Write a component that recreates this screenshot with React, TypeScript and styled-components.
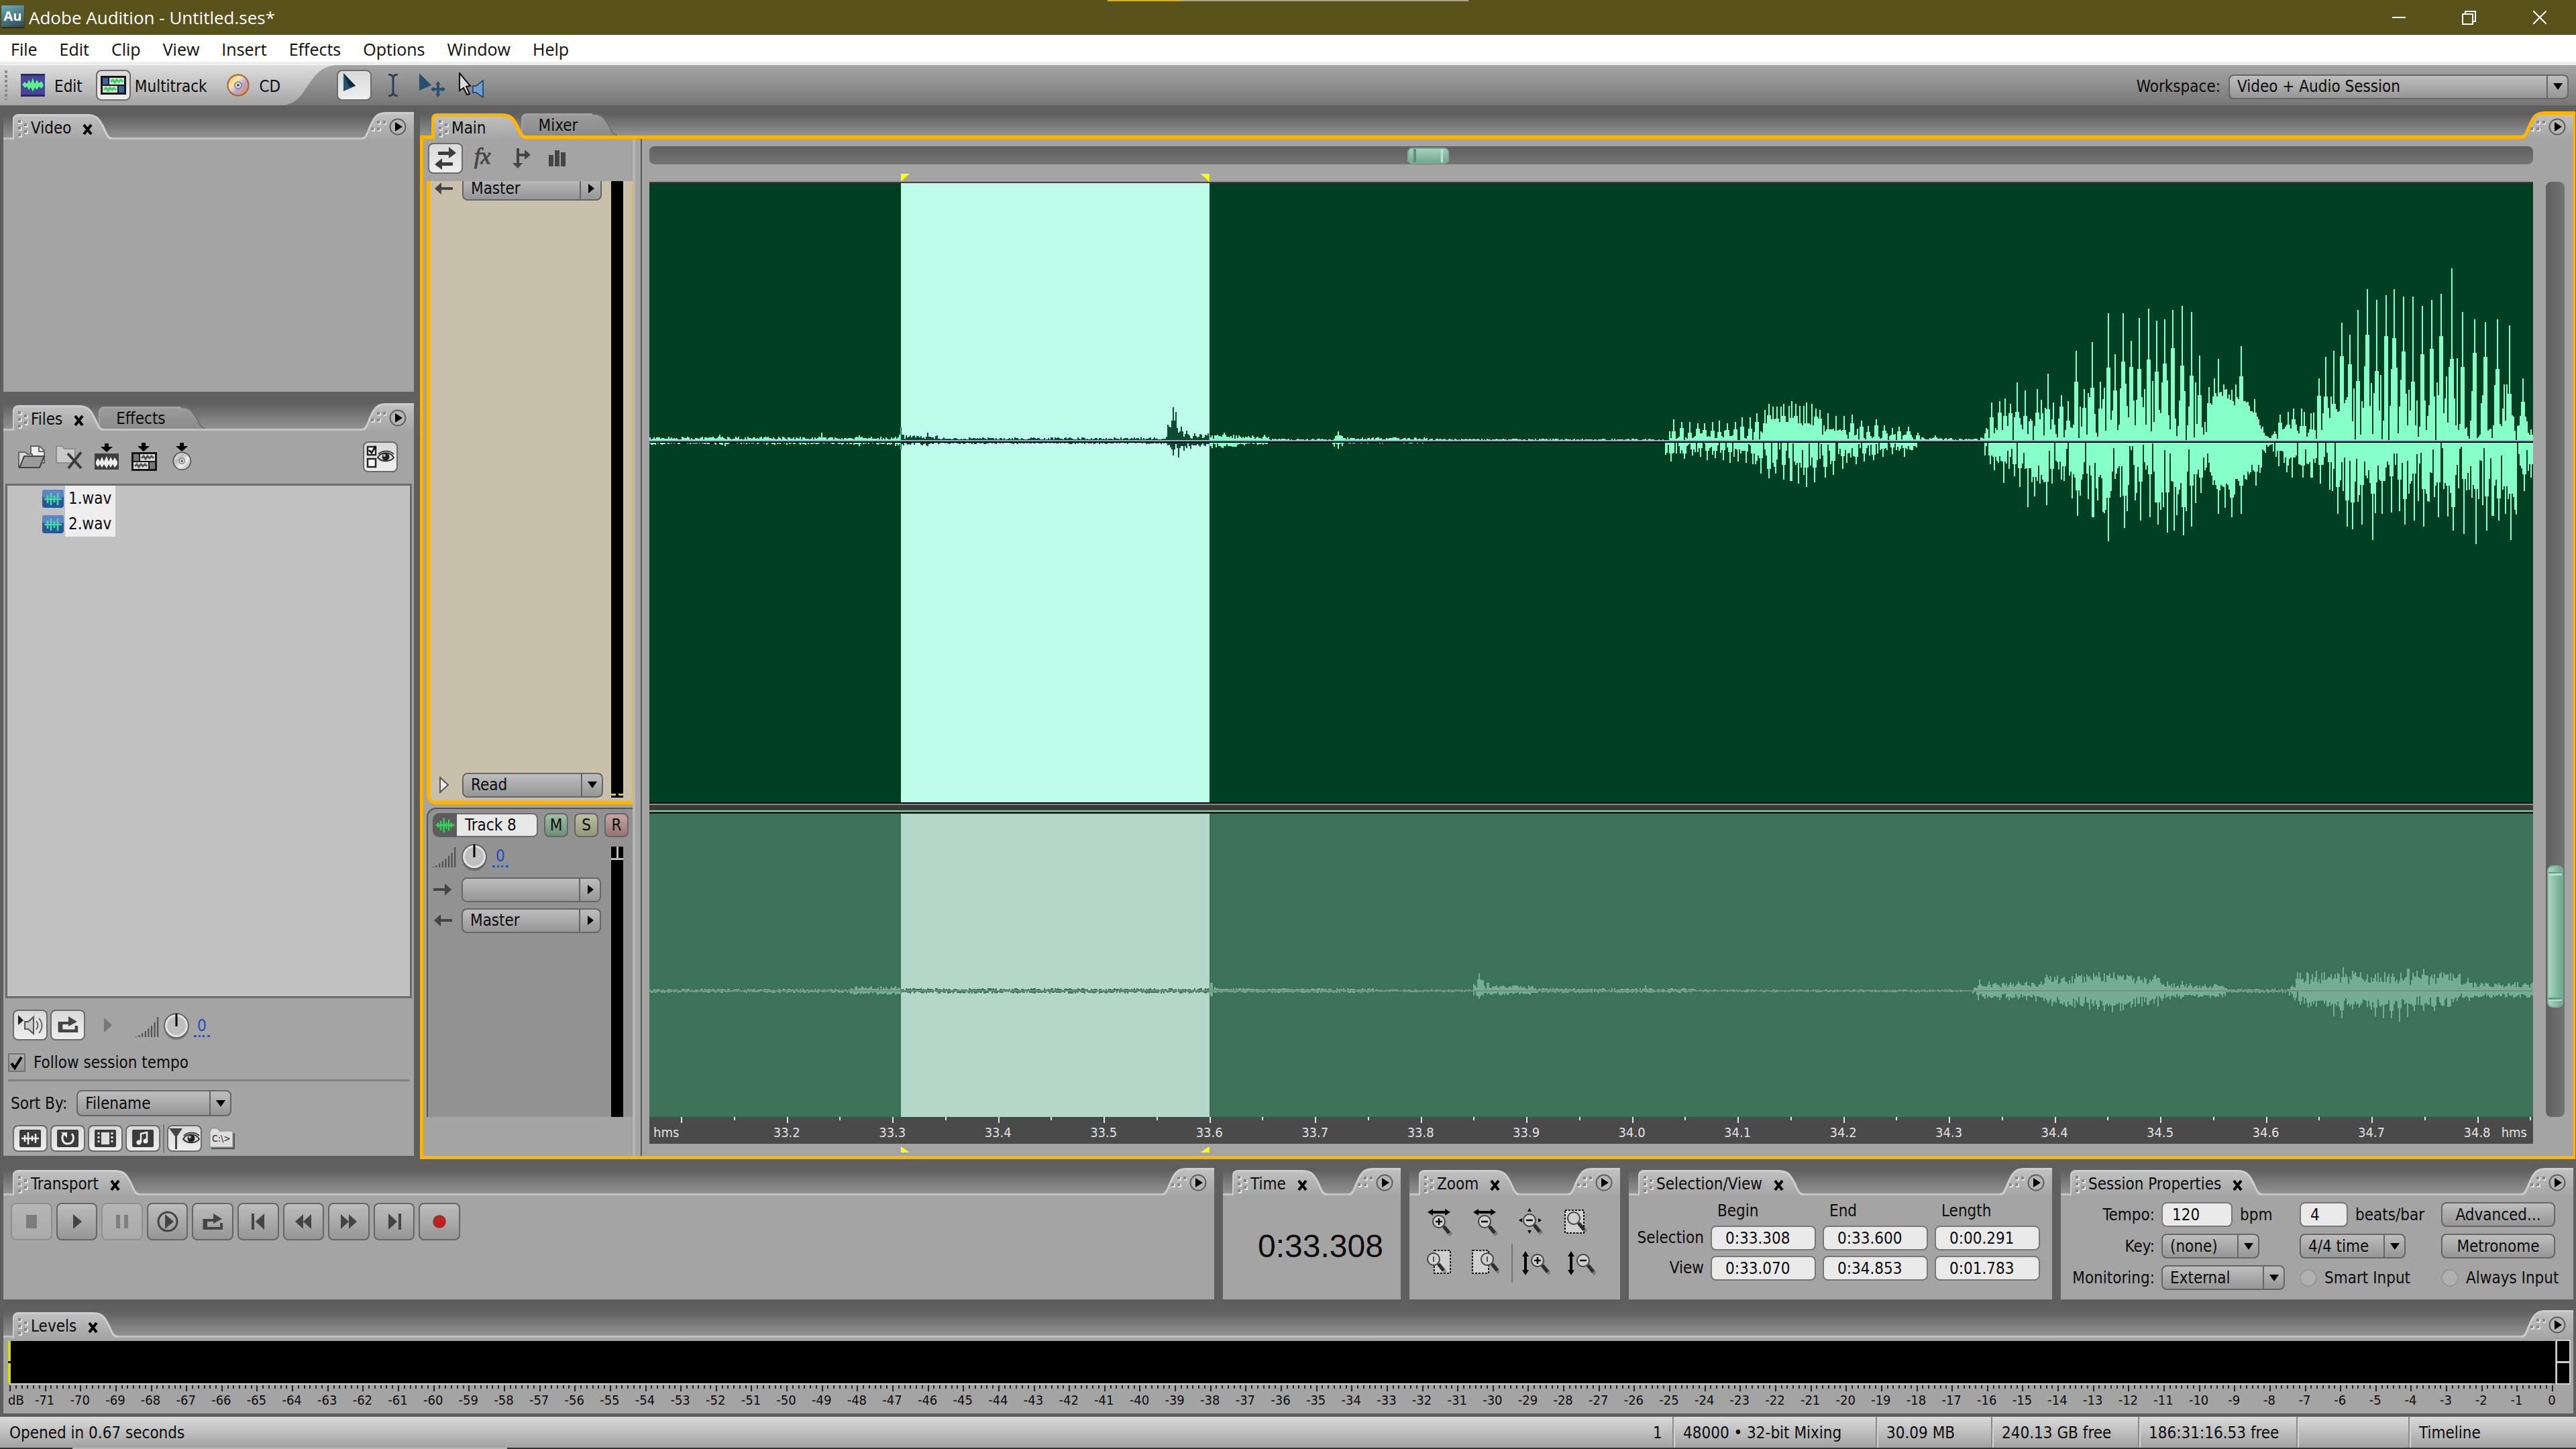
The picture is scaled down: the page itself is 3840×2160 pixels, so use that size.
import React from "react";
import styled, { createGlobalStyle, css } from "styled-components";

const ui = `"DejaVu Sans Condensed", "Noto Sans", sans-serif`;
const shell = `"Open Sans", "Noto Sans", sans-serif`;
const amber = "#ffb400";
const ink = "#454545";

const GlobalStyle = createGlobalStyle`
  *, *::before, *::after { box-sizing: border-box; }
  html, body { margin: 0; padding: 0; background: #5f5f5f; }
  body { font-family: ${ui}; font-size: 24px; line-height: 30px; color: #0c0c0c; }
  button, input, select { font: inherit; color: inherit; margin: 0; padding: 0; }
  svg { display: block; flex: none; }
`;

/* ---------- shell ---------- */

const Shell = styled.div`
  position: relative;
  display: flex;
  flex-direction: column;
  min-height: 100vh;
  background: #5f5f5f;
`;
const TopHint = styled.div`
  position: absolute;
  top: 0;
  left: 43%;
  width: 14%;
  height: 2px;
  background: linear-gradient(90deg, #d8b021 20%, #aaa78c 20%);
`;
const TitleBar = styled.header`
  display: flex;
  align-items: center;
  height: 52px;
  padding: 0 2px;
  background: #59521b;
  color: #fff;
  font: 26px/32px ${shell};
`;
const AppTitle = styled.h1`
  flex: 1;
  margin: 0;
  padding-left: 7px;
  font: inherit;
`;
const AppBadge = styled.span`
  width: 34px;
  height: 32px;
  margin-bottom: 4px;
  background: linear-gradient(160deg, #6fa9b4, #2b4a59);
  box-shadow: 0 2px 2px rgba(0, 0, 0, 0.5);
  color: #fff;
  font: bold 20px/32px "Open Sans", sans-serif;
  text-align: center;
`;
const WindowButton = styled.button`
  display: flex;
  align-items: center;
  justify-content: center;
  width: 105px;
  height: 50px;
  border: 0;
  background: none;
`;
const MenuBar = styled.nav`
  display: flex;
  align-items: center;
  gap: 33px;
  height: 45px;
  padding: 0 16px 3px;
  background: linear-gradient(#fff 40px, #e9e9e9 41px, #f4f4f4);
  font: 25px/32px ${shell};
`;
const MenuItem = styled.button`
  border: 0;
  background: none;
`;

/* ---------- tool bar ---------- */

const ToolBar = styled.div`
  display: flex;
  align-items: center;
  height: 60px;
  padding-right: 11px;
  background: linear-gradient(#a6a6a6, #767676);
`;
const ModeStrip = styled.div`
  display: flex;
  align-items: center;
  align-self: stretch;
  padding-left: 6px;
  background: linear-gradient(#dedede, #a5a5a5);
`;
const ModeList = styled.div`
  display: flex;
  gap: 20px;
  padding-left: 11px;
`;
const Mode = styled.button`
  display: flex;
  align-items: center;
  gap: 6px;
  height: 46px;
  border: 0;
  background: none;
`;
const ModeText = styled.span`
  padding-top: 3px;
`;
const face = css`
  border: 2px solid #6b6b6b;
  border-radius: 8px;
  background: linear-gradient(#d9d9d9, #eeeeee);
`;
const IconFrame = styled.span<{ $on?: boolean }>`
  display: flex;
  align-items: center;
  justify-content: center;
  width: 52px;
  height: 46px;
  ${(p) => p.$on && face}
`;
const ToolGroup = styled.div`
  display: flex;
  flex: 1;
`;
const ToolButton = styled.button<{ $on?: boolean; $h?: number; $w?: number }>`
  display: flex;
  align-items: center;
  justify-content: center;
  width: ${(p) => p.$w ?? 52}px;
  height: ${(p) => p.$h ?? 46}px;
  border: 0;
  background: none;
  ${(p) => p.$on && face}
`;
const Labelled = styled.label`
  display: flex;
  align-items: center;
  gap: 12px;
  padding-top: 4px;
`;

/* ---------- shared controls ---------- */

const ComboFrame = styled.span<{ $w?: number; $h?: number }>`
  display: flex;
  width: ${(p) => (p.$w ? p.$w + "px" : "100%")};
  height: ${(p) => p.$h ?? 37}px;
  border: 2px solid #666;
  border-radius: 8px;
  background: linear-gradient(#bebebe, #969696);
  overflow: hidden;
`;
const ComboSelect = styled.select`
  appearance: none;
  flex: 1;
  min-width: 0;
  padding-left: 11px;
  border: 0;
  background: none;
  outline: none;
`;
const ComboArrow = styled.span`
  display: flex;
  align-items: center;
  justify-content: center;
  width: 31px;
  border-left: 2px solid #666;
`;
function Combo({ label, value, w, h, side, id }: { label: string; value: string; w?: number; h?: number; side?: boolean; id?: string }) {
  return (
    <ComboFrame $w={w} $h={h}>
      <ComboSelect aria-label={label} id={id} defaultValue={value}>
        <option value={value}>{value}</option>
      </ComboSelect>
      <ComboArrow>
        <svg width="16" height="16" viewBox="0 0 16 16">
          <path d={side ? "M4 1 L13 8 L4 15Z" : "M1 3 H15 L8 13Z"} fill="#000" />
        </svg>
      </ComboArrow>
    </ComboFrame>
  );
}
const Field = styled.input<{ $w?: number }>`
  width: ${(p) => (p.$w ? p.$w + "px" : "100%")};
  height: 37px;
  padding-left: 14px;
  border: 2px solid #777;
  border-radius: 8px;
  background: #eaeaea;
`;
const SpanField = styled(Field)`
  padding-left: 20px;
`;
const PushButton = styled.button`
  height: 37px;
  border: 2px solid #666;
  border-radius: 8px;
  background: linear-gradient(#bebebe, #969696);
`;

/* ---------- panels and tabs ---------- */

const Panel = styled.section<{ $grow?: boolean }>`
  display: flex;
  flex-direction: column;
  min-width: 0;
  flex: ${(p) => (p.$grow ? "1 1 auto" : "none")};
`;
const PanelHead = styled.div<{ $pad: number; $active?: boolean }>`
  display: flex;
  align-items: flex-end;
  padding-top: ${(p) => p.$pad}px;
  padding-left: ${(p) => (p.$active ? 17 : 14)}px;
  background: linear-gradient(#5f5f5f 30%, #929292);
  border-bottom: ${(p) => (p.$active ? "5px solid " + amber : "3px solid #c2c2c2")};
`;
const TabWrap = styled.div<{ $active?: boolean; $behind?: boolean }>`
  display: flex;
  position: relative;
  z-index: ${(p) => (p.$behind ? 0 : 1)};
  margin-bottom: ${(p) => (p.$behind ? 0 : p.$active ? -5 : -3)}px;
  margin-left: ${(p) => (p.$behind ? -7 : 0)}px;
`;
const TabFace = styled.div<{ $active?: boolean; $behind?: boolean; $plain?: boolean }>`
  display: flex;
  align-items: center;
  gap: 4px;
  height: ${(p) => (p.$behind ? 33 : 38)}px;
  padding-left: ${(p) => (p.$behind ? 24 : 4)}px;
  padding-right: ${(p) => (p.$plain ? 22 : 0)}px;
  border-style: solid;
  border-width: ${(p) => (p.$active ? "5px 0 0 5px" : "3px 0 0 2px")};
  border-color: ${(p) => (p.$active ? amber : p.$behind ? "#a2a2a2" : "#cdcdcd")};
  border-top-left-radius: 8px;
  background: ${(p) => (p.$behind ? "linear-gradient(#9b9b9b, #8b8b8b)" : "linear-gradient(#c0c0c0, #a5a5a5)")};
`;
const TabLabel = styled.h2`
  margin: 0;
  font: inherit;
  white-space: nowrap;
`;
const CloseButton = styled.button`
  display: flex;
  position: relative;
  z-index: 1;
  margin-right: -8px;
  padding: 6px 0 2px 13px;
  border: 0;
  background: none;
`;
const HeadSpace = styled.div`
  flex: 1;
`;
const CornerWrap = styled.div<{ $active?: boolean }>`
  display: flex;
  position: relative;
  margin-bottom: ${(p) => (p.$active ? -5 : -3)}px;
`;
const CornerFace = styled.div<{ $active?: boolean }>`
  display: flex;
  align-items: center;
  gap: 4px;
  height: 41px;
  padding-right: 11px;
  border-top: ${(p) => (p.$active ? "5px solid " + amber : "3px solid #cdcdcd")};
  border-right: ${(p) => (p.$active ? "3px solid " + amber : "0")};
  background: linear-gradient(#c0c0c0, #a5a5a5);
  & > svg { margin-left: -26px; }
`;
const RoundButton = styled.button`
  display: flex;
  padding: 0;
  border: 0;
  background: none;
`;
const PanelBody = styled.div<{ $h?: number }>`
  flex: 1 0 auto;
  min-height: ${(p) => p.$h ?? 0}px;
  background: #a4a4a4;
`;

function Grip({ corner }: { corner?: boolean }) {
  const dots = corner ? [[12, 2], [21, 2], [3, 12], [12, 12]] : [[2, 2], [2, 12], [2, 22], [11, 7], [11, 17]];
  return (
    <svg width={corner ? 26 : 17} height={corner ? 22 : 28} viewBox={corner ? "0 0 26 22" : "0 0 17 28"}>
      {dots.map(([x, y]) => (
        <g key={x + "-" + y}>
          <rect x={x + 1} y={y + 1} width="5" height="5" fill="#e2e2e2" />
          <rect x={x} y={y} width="4" height="4" fill="#868686" />
        </g>
      ))}
    </svg>
  );
}
function Slope({ active, behind, flip }: { active?: boolean; behind?: boolean; flip?: boolean }) {
  const h = behind ? 33 : flip ? 41 : 38;
  const s = active ? 5 : behind ? 2 : 3;
  const t = s / 2;
  const edge = `M0 ${t} C13 ${t} 17 6 23 ${h * 0.46} C29 ${h * 0.78} 30 ${h - t} 37 ${h - t}`;
  const gid = `sl${active ? 1 : 0}${behind ? 1 : 0}${flip ? 1 : 0}`;
  return (
    <svg width="37" height={h} viewBox={`0 0 37 ${h}`}>
      <defs>
        <linearGradient id={gid} x1="0" y1="0" x2="0" y2="1">
          <stop offset="0" stopColor={behind ? "#9b9b9b" : "#c0c0c0"} />
          <stop offset="1" stopColor={behind ? "#8b8b8b" : "#a5a5a5"} />
        </linearGradient>
      </defs>
      <g transform={flip ? "translate(37 0) scale(-1 1)" : undefined}>
        <path d={`${edge} V${h} H0Z`} fill={`url(#${gid})`} />
        <path d={edge} fill="none" stroke={active ? amber : behind ? "#6e6e6e" : "#cdcdcd"} strokeWidth={s} />
      </g>
    </svg>
  );
}
function Tab({ label, active, behind, closable }: { label: string; active?: boolean; behind?: boolean; closable?: boolean }) {
  return (
    <TabWrap $active={active} $behind={behind}>
      <TabFace $active={active} $behind={behind} $plain={!closable}>
        {!behind && <Grip />}
        <TabLabel>{label}</TabLabel>
        {closable && (
          <CloseButton aria-label={"Close " + label}>
            <svg width="15" height="16" viewBox="0 0 15 16">
              <path d="M2 1 L13 15 M13 1 L2 15" stroke="#000" strokeWidth="4" />
            </svg>
          </CloseButton>
        )}
      </TabFace>
      <Slope active={active} behind={behind} />
    </TabWrap>
  );
}
function Corner({ active }: { active?: boolean }) {
  return (
    <CornerWrap $active={active}>
      <Slope active={active} flip />
      <CornerFace $active={active}>
        <Grip corner />
        <RoundButton aria-label="Panel menu">
          <svg width="26" height="26" viewBox="0 0 26 26">
            <circle cx="13" cy="13" r="11.5" fill="#b5b5b5" stroke="#606060" strokeWidth="2" />
            <path d="M9 6 L20 13 L9 20Z" fill="#000" />
          </svg>
        </RoundButton>
      </CornerFace>
    </CornerWrap>
  );
}

/* ---------- workspace ---------- */

const Workspace = styled.main`
  display: grid;
  grid-template-columns: 612px minmax(0, 1fr);
  gap: 9px;
  flex: 1;
  padding: 0 1px 0 5px;
`;
const LeftColumn = styled.div`
  display: flex;
  flex-direction: column;
  padding-bottom: 5px;
`;
const FilesBody = styled(PanelBody)`
  display: flex;
  flex-direction: column;
  padding: 0 3px 5px;
`;
const FileTools = styled.div`
  display: flex;
  align-items: center;
  gap: 4px;
  padding: 16px 21px 17px 13px;
`;
const FileList = styled.ul`
  flex: 1;
  margin: 0;
  padding: 0 0 0 52px;
  border: 3px solid #6c6c6c;
  background: #c1c1c1;
  list-style: none;
`;
const FileRow = styled.li`
  display: flex;
  align-items: center;
  gap: 2px;
  height: 38px;
`;
const FileName = styled.span`
  width: 75px;
  padding-left: 5px;
  background: #eeeeee;
  line-height: 38px;
`;
const ControlRow = styled.div<{ $gap?: number; $top?: number; $left?: number }>`
  display: flex;
  align-items: center;
  gap: ${(p) => p.$gap ?? 4}px;
  padding-top: ${(p) => p.$top ?? 0}px;
  padding-left: ${(p) => p.$left ?? 0}px;
`;
const Rule = styled.hr`
  width: calc(100% - 8px);
  margin: 10px 4px 0;
  border: 0;
  border-top: 3px solid #818181;
`;
const Tick = styled.input`
  appearance: none;
  width: 26px;
  height: 28px;
  border: 2px solid #747474;
  background: linear-gradient(#aaa, #969696);
`;
const TickBox = styled.span`
  display: grid;
  & > * { grid-area: 1 / 1; }
  & > svg { pointer-events: none; }
`;
const Upright = styled.span<{ $h: number }>`
  width: 2px;
  height: ${(p) => p.$h}px;
  background: #777;
`;
const Gain = styled.a`
  padding: 0 5px;
  border-bottom: 3px dotted #1f55c8;
  color: #1f4fc0;
  line-height: 28px;
  text-decoration: none;
`;

/* ---------- session view ---------- */

const SessionBody = styled.div`
  display: grid;
  grid-template-columns: 312px 14px minmax(0, 1fr);
  flex: 1;
  border: solid ${amber};
  border-width: 0 3px 5px 5px;
  background: #a4a4a4;
`;
const Splitter = styled.div`
  border-left: 4px solid #b4b4b4;
  border-right: 2px solid #555;
`;
const TrackColumn = styled.div`
  display: flex;
  flex-direction: column;
  padding-left: 5px;
`;
const TrackTools = styled.div`
  display: flex;
  align-items: center;
  height: 63px;
  padding: 0 0 6px 2px;
`;
const TrackCard = styled.div<{ $sel?: boolean; $share: number }>`
  display: grid;
  grid-template-columns: minmax(0, 1fr) 18px;
  gap: 12px;
  flex: ${(p) => p.$share} 1 0;
  padding: ${(p) => (p.$sel ? "0 12px 5px 5px" : "6px 14px 0 7px")};
  margin-bottom: ${(p) => (p.$sel ? 5 : 0)}px;
  border-style: solid;
  border-width: ${(p) => (p.$sel ? "0 2px 5px 5px" : "2px 0 0 2px")};
  border-color: ${(p) => (p.$sel ? `${amber} #e0bf63 ${amber} ${amber}` : "#555")};
  border-radius: ${(p) => (p.$sel ? "0 0 0 14px" : "14px 0 0 0")};
  background: ${(p) => (p.$sel ? "#c8c0aa" : "#929292")};
  overflow: hidden;
`;
const TrackControls = styled.div<{ $scrolled?: boolean }>`
  display: flex;
  flex-direction: column;
  justify-content: ${(p) => (p.$scrolled ? "space-between" : "flex-start")};
  gap: 9px;
  min-width: 0;
  margin-top: ${(p) => (p.$scrolled ? -8 : 0)}px;
`;
const Route = styled.div`
  display: grid;
  grid-template-columns: 31px 1fr;
  gap: 12px;
  align-items: center;
`;
const Meter = styled.div`
  display: flex;
  flex-direction: column;
`;
const MeterGap = styled.div`
  height: 50px;
`;
const MeterClip = styled.div`
  height: 20px;
  border-bottom: 3px solid #bbb;
  background: linear-gradient(90deg, #000 8px, #bbb 8px, #bbb 11px, #000 11px);
`;
const MeterFill = styled.div`
  flex: 1;
  background: #000;
`;
const MeterFloor = styled.div`
  height: 6px;
  border-bottom: 3px solid #000;
  background: linear-gradient(90deg, #d9d900 7px, #000 7px, #000 11px, #d9d900 11px);
`;
const TrackTitle = styled.div`
  display: grid;
  grid-template-columns: 157px 36px 36px 36px;
  column-gap: 9px;
  width: 292px;
  height: 36px;
`;
const TrackBadge = styled.div`
  display: grid;
  grid-template-columns: 36px 1fr;
`;
const TrackIcon = styled.span`
  display: flex;
  align-items: center;
  padding-left: 2px;
  border-radius: 10px 0 0 10px;
  background: #5c5c5c;
`;
const TrackName = styled.input`
  width: 100%;
  padding-left: 12px;
  border: 2px solid #6c6c6c;
  border-left: 0;
  border-radius: 0 8px 8px 0;
  background: #e8e8e8;
`;
const ToggleButton = styled.button<{ $a: string; $b: string }>`
  border: 2px solid #666;
  border-radius: 8px;
  background: linear-gradient(${(p) => p.$a}, ${(p) => p.$b});
`;
const Timeline = styled.div`
  display: grid;
  grid-template-columns: minmax(0, 1fr) 28px;
  grid-template-rows: 27px 26px minmax(0, 1fr) 40px 18px;
  column-gap: 19px;
  padding: 11px 13px 0 11px;
`;
const ScrollTrack = styled.div<{ $vertical?: boolean }>`
  position: relative;
  grid-row: ${(p) => (p.$vertical ? 3 : 1)};
  grid-column: ${(p) => (p.$vertical ? 2 : 1)};
  border-radius: 8px;
  background: linear-gradient(${(p) => (p.$vertical ? "90deg, " : "")}#606060, #747474);
`;
const ThumbX = styled.div`
  position: absolute;
  top: 2px;
  bottom: 1px;
  width: 62px;
  border: 2px solid #7fae98;
  border-radius: 7px;
  background: linear-gradient(90deg, transparent 7px, #5f8f7a 7px, #5f8f7a 11px, transparent 11px, transparent 48px, #bfe3d1 48px, #bfe3d1 51px, transparent 51px),
    linear-gradient(#a9cfbc, #74a98f);
`;
const ThumbY = styled.div`
  position: absolute;
  left: 2px;
  right: 2px;
  border: 2px solid #7fae98;
  border-radius: 8px;
  background: linear-gradient(transparent 8px, #5f9f80 8px, #5f9f80 10px, #b5e0cc 10px, #b5e0cc 13px, transparent 13px),
    linear-gradient(0deg, transparent 8px, #b5e0cc 8px, #b5e0cc 10px, #5f9f80 10px, #5f9f80 13px, transparent 13px),
    linear-gradient(90deg, #a9d6c0, #6ea88c);
`;
const MarkerRow = styled.div<{ $row: number }>`
  position: relative;
  grid-row: ${(p) => p.$row};
  grid-column: 1;
`;
const Marker = styled.span<{ $bottom?: boolean; $end?: boolean }>`
  position: absolute;
  ${(p) => (p.$bottom ? "top: 4px;" : "bottom: 0;")}
  width: 13px;
  height: ${(p) => (p.$bottom ? 9 : 12)}px;
  background: #ffff00;
  transform: translateX(${(p) => (p.$end ? "-100%" : "0")});
  clip-path: polygon(${(p) =>
    p.$bottom
      ? p.$end ? "100% 0, 100% 100%, 0 100%" : "0 0, 100% 100%, 0 100%"
      : p.$end ? "0 0, 100% 0, 100% 100%" : "0 0, 100% 0, 0 100%"});
`;
const Lanes = styled.div`
  display: flex;
  flex-direction: column;
  grid-row: 3;
  grid-column: 1;
  border-top: 2px solid #3f3f3f;
`;
const Lane = styled.div<{ $share: number }>`
  flex: ${(p) => p.$share} 1 0;
  min-height: 0;
  & > svg { width: 100%; height: 100%; }
`;
const LaneBar = styled.div`
  height: 17px;
  background: linear-gradient(#111 2px, #8a8a8a 2px, #8a8a8a 4px, #3a3a3a 4px, #3a3a3a 12px, #93d9ab 12px, #93d9ab 14px, #15281d 14px);
`;
const Ruler = styled.div`
  position: relative;
  grid-row: 4;
  grid-column: 1;
  background: #4a4a4a;
  color: #e2e2e2;
  font-size: 20px;
  line-height: 24px;
`;
const RulerTick = styled.span<{ $minor?: boolean }>`
  position: absolute;
  top: 0;
  width: 2px;
  height: ${(p) => (p.$minor ? 5 : 9)}px;
  background: #e2e2e2;
`;
const ScaleText = styled.span`
  position: absolute;
  top: 11px;
  transform: translateX(-50%);
  white-space: nowrap;
`;
const RulerUnit = styled.span<{ $right?: boolean }>`
  position: absolute;
  top: 11px;
  ${(p) => (p.$right ? "right: 9px;" : "left: 6px;")}
`;

/* ---------- wave data ---------- */

type Pt = [number, number];
type Band = [number, number, number, number];

const LANE_W = 2808;
const pairs = (s: string): Pt[] => s.split(" ").map((p) => p.split(":").map(Number) as Pt);
const place = (s: string, x0: number, kx: number, mid: number, ky: number): Pt[] =>
  pairs(s).map(([x, y]) => [x0 + x / kx, Math.abs(y - mid) / ky]);

const upperTop = [
  ...place(
    "103:820 117:833 129:833 142:840 154:840 166:833 178:827 190:840 203:833 215:813 228:813 239:793 252:780 259:752 264:765 271:765 277:765 283:752 290:760 296:740 302:752 308:760 314:760 320:745 327:752 334:772 340:780 353:793 366:805 379:806 393:800 408:827 420:850 433:820 446:847 458:860 470:853 485:853 500:880 528:893 611:860 620:745 633:740 642:727 649:752 661:657 675:692 693:685 700:733 712:618 720:745 733:712 744:740 757:515 769:685 782:475 796:652 808:347 821:530 833:347 847:470 860:367 874:327 887:380 901:375 914:333 928:313 943:340 957:537 973:678 982:638 987:550 997:665 1010:688 1017:665 1024:495 1030:740 1046:732 1060:853 1080:875 1088:800 1100:787 1109:772 1122:772 1127:787 1137:793 1151:638 1161:543 1174:515 1188:388 1202:442 1215:333 1229:240 1244:287 1259:265 1273:240 1288:273 1303:273 1318:313 1334:287 1350:260 1367:145 1384:340 1403:375 1421:387 1440:375 1460:400 1482:638 1494:867",
    1432, 1.0889, 917, 3
  ),
  ...place("137:1338 320:1330 386:1342 461:1304 510:1330 951:1216 957:1236 966:1303 975:1320 990:1332 1015:1332 1043:1330 1095:1340 1115:1338 1248:1324 1253:1340", -8, 1.206, 1365, 3),
];
const upperBottom = [
  ...place(
    "100:1010 121:997 134:983 147:990 158:1003 171:995 183:1003 195:1017 207:1010 220:1017 233:1023 245:1063 257:1085 270:1063 282:1090 294:1097 306:1110 318:1125 333:1103 350:1083 362:1070 377:1043 385:1017 399:1023 412:1010 428:1003 443:990 458:977 478:990 490:960 617:1023 625:1050 640:1105 657:1077 666:1123 678:1213 690:1165 698:1110 708:1205 717:1110 732:1090 737:1097 750:1175 758:1253 764:1163 777:1177 784:1260 791:1185 803:1240 810:1367 828:1170 835:1307 840:1232 855:1150 862:1273 877:1260 889:1293 894:1225 904:1327 916:1320 921:1250 931:1340 936:1232 945:1300 950:1197 960:1150 979:1115 987:1245 999:1217 1009:1260 1014:1157 1024:1245 1033:1090 1048:1117 1055:1060 1085:1030 1098:1057 1108:1083 1125:1083 1139:1083 1154:1110 1168:1137 1182:1245 1196:1300 1205:1313 1220:1293 1238:1360 1254:1245 1269:1238 1281:1232 1291:1293 1306:1273 1320:1300 1330:1190 1345:1260 1360:1257 1369:1320 1386:1333 1406:1380 1423:1320 1433:1253 1443:1273 1453:1245 1463:1360 1485:1143 1494:1083",
    1432, 1.0889, 917, 3
  ),
  ...place("146:1389 386:1389 462:1404 510:1389 951:1431 960:1440 970:1410 982:1401 1000:1392 1040:1398 1060:1392 1080:1385 1248:1401", -8, 1.206, 1365, 3),
];
const upperBands: Band[] = [
  [0, 375, 6, 6], [375, 430, 8, 7], [430, 770, 5, 5], [770, 837, 10, 8], [837, 880, 9, 11], [880, 925, 7, 6], [925, 1020, 3, 2],
  [1020, 1160, 5, 4], [1160, 1512, 3, 2], [1880, 1980, 4, 2], [2408, 2420, 8, 10],
];
const upperSolid: Pt[] = [[2320, 0], [2326, 58], [2338, 78], [2350, 84], [2362, 68], [2378, 66], [2392, 46], [2400, 34], [2408, 0]];

const lowerTop = [
  ...place(
    "175:785 195:792 212:798 230:798 247:795 265:792 283:792 301:798 319:792 337:785 354:785 372:772 390:770 400:760 411:765 425:765 440:760 453:753 465:760 477:760 488:753 498:765 509:765 518:765 534:780 545:780 555:783 573:785 594:778 612:792 630:800 648:790 665:800 700:803 725:805 750:822 905:810 918:753 940:753 961:748 980:753 997:762 1014:762 1024:735 1045:748 1064:753 1081:762 1100:762 1120:753 1140:760 1158:755 1176:740 1195:748 1213:740 1232:765 1255:780 1275:772 1295:785 1317:778 1335:800 1360:800 1390:808 1420:808 1450:800 1465:800",
    1872, 1.568, 832, 2.8
  ),
  [1237, 26] as Pt, [1242, 16] as Pt, [1250, 12] as Pt, [838, 12] as Pt, [1485, 8] as Pt,
];
const lowerBottom = [
  ...place(
    "170:872 186:865 203:862 222:872 243:872 265:868 285:870 305:878 325:875 345:880 362:880 379:898 397:903 414:895 432:910 450:910 467:915 485:922 503:915 509:912 527:903 547:885 567:892 600:875 618:868 643:865 680:852 713:862 737:848 910:870 925:890 943:903 961:898 985:898 1003:937 1021:948 1045:910 1062:903 1080:898 1099:937 1117:948 1137:948 1155:960 1173:942 1190:915 1213:915 1236:915 1253:890 1271:898 1290:875 1320:875 1345:858 1380:852 1430:858 1460:860",
    1872, 1.568, 832, 2.8
  ),
  [1237, 12] as Pt, [838, 8] as Pt,
];
const lowerBands: Band[] = [
  [0, 300, 3, 3], [300, 375, 7, 6], [375, 837, 4, 4], [837, 1080, 4, 3], [1080, 1230, 2, 2],
  [1240, 1320, 9, 7], [1320, 1480, 4, 3], [1480, 1560, 4, 3], [1560, 1960, 2, 2],
  [1980, 2080, 12, 12], [2080, 2250, 24, 24], [2250, 2350, 10, 10], [2350, 2440, 3, 3], [2460, 2700, 28, 24], [2700, 2808, 13, 11],
];

function noise(n: number) {
  const v = Math.sin(n * 127.1 + 11.7) * 43758.5453;
  return v - Math.floor(v);
}
function level(x: number, peaks: Pt[], seed: number, dense: number) {
  let v = 0;
  for (const [px, a] of peaks) {
    const d = Math.abs(x - px);
    if (d < 1.01) v = Math.max(v, a);
    else if (d < 3) v = Math.max(v, a * (0.4 + 0.35 * noise(px + seed)));
    else if (d < 9) v = Math.max(v, a * dense * noise(x * 1.3 + seed));
  }
  return v;
}
function solidAt(x: number, pts: Pt[]) {
  for (let i = 1; i < pts.length; i++) {
    const [x0, y0] = pts[i - 1];
    const [x1, y1] = pts[i];
    if (x >= x0 && x <= x1) return y0 + ((y1 - y0) * (x - x0)) / (x1 - x0);
  }
  return 0;
}
function wavePath(mid: number, top: Pt[], bottom: Pt[], bands: Band[], solid: Pt[]) {
  let d = "";
  for (let x = 1; x < LANE_W; x += 2) {
    let up = level(x, top, 3, 0.5);
    let down = level(x, bottom, 8, 0.75);
    for (const [a, b, u, l] of bands) {
      if (x >= a && x < b) {
        up = Math.max(up, u * (0.3 + 0.7 * noise(x)));
        down = Math.max(down, l * (0.3 + 0.7 * noise(x + 5)));
      }
    }
    const s = solidAt(x, solid);
    up = Math.max(up, s * (0.72 + 0.28 * noise(x + 2)));
    down = Math.max(down, s * (0.6 + 0.35 * noise(x + 9)));
    if (up + down > 1) d += `M${x} ${Math.round(mid - up)}V${Math.round(mid + down)}`;
  }
  return d;
}

const VIEW = { from: 33.07, span: 1.783 };
const SEL = { from: 33.308, to: 33.6 };
const at = (t: number) => (t - VIEW.from) / VIEW.span;
const pct = (t: number) => `${at(t) * 100}%`;

const upperPath = wavePath(384, upperTop, upperBottom, upperBands, upperSolid);
const lowerPath = wavePath(264, lowerTop, lowerBottom, lowerBands, []);

type WaveProps = { id: string; h: number; mid: number; d: string; bg: string; wave: string; selBg: string; selWave: string; axis: string; under?: string };
function Wave({ id, h, mid, d, bg, wave, selBg, selWave, axis, under }: WaveProps) {
  const x0 = at(SEL.from) * LANE_W;
  const x1 = at(SEL.to) * LANE_W;
  return (
    <svg viewBox={`0 0 ${LANE_W} ${h}`} preserveAspectRatio="none" role="img" aria-label={id} shapeRendering="crispEdges">
      <clipPath id={id + "Clip"}>
        <rect x={x0} y="0" width={x1 - x0} height={h} />
      </clipPath>
      <rect width={LANE_W} height={h} fill={bg} />
      <path d={d} stroke={wave} strokeWidth="2" />
      <rect x={x0} width={x1 - x0} height={h} fill={selBg} />
      <path d={d} stroke={selWave} strokeWidth="2" clipPath={`url(#${id}Clip)`} />
      <rect y={mid - 1} width={LANE_W} height="2" fill={axis} />
      {under && <rect y={mid + 1} width={LANE_W} height="2" fill={under} />}
    </svg>
  );
}

/* ---------- bottom panels ---------- */

const BottomRow = styled.div`
  display: grid;
  grid-template-columns: minmax(0, 1fr) 265px 314px 631px 764px;
  gap: 13px;
  padding: 0 4px 0 5px;
`;
const TransportRow = styled.div`
  display: grid;
  grid-template-columns: repeat(10, 1fr);
  gap: 6px;
  width: 670px;
  margin: 11px 0 0 11px;
`;
const TransportButton = styled.button`
  display: flex;
  align-items: center;
  justify-content: center;
  height: 56px;
  border: 2px solid #666;
  border-radius: 8px;
  background: linear-gradient(#bdbdbd, #969696);
  &:disabled { border-color: #8f8f8f; background: linear-gradient(#b6b6b6, #a9a9a9); }
`;
const Clock = styled.output`
  display: block;
  padding: 50px 0 0 52px;
  font: 48px/52px "Liberation Sans", Arial, sans-serif;
`;
const ZoomRows = styled.div`
  display: flex;
  flex-direction: column;
  gap: 14px;
  padding: 18px 20px 0;
`;
const ZoomLine = styled.div`
  display: flex;
  align-items: center;
  gap: 20px;
  height: 46px;
`;
const ZoomRule = styled.span`
  width: 2px;
  height: 58px;
  margin: 0 -10px 0 -4px;
  background: #777;
`;
const ZoomButton = styled.button`
  display: flex;
  justify-content: center;
  width: 48px;
  border: 0;
  background: none;
`;
const SelTable = styled.table`
  width: 100%;
  padding: 6px 8px 0 0;
  border-spacing: 10px 0;
  table-layout: fixed;
  th { height: 34px; padding: 0; font-weight: normal; text-align: left; }
  thead th { padding-left: 10px; }
  td { height: 45px; padding: 2px 0 0; }
  tbody th { text-align: right; }
  th:first-child { width: 102px; padding: 0; }
`;
const SessionGrid = styled.div`
  display: grid;
  grid-template-columns: 140px 196px 201px 190px;
  column-gap: 10px;
  row-gap: 10px;
  align-items: center;
  padding-top: 10px;
`;
const RightLabel = styled.label`
  text-align: right;
`;
const Inline = styled.label`
  display: flex;
  align-items: center;
  gap: 11px;
  white-space: nowrap;
`;
const WideButton = styled(PushButton)`
  width: 170px;
`;
const Dot = styled.input`
  appearance: none;
  width: 26px;
  height: 26px;
  border: 2px solid #989898;
  border-radius: 50%;
  background: #b0b0b0;
`;

/* ---------- levels and status ---------- */

const LevelsWrap = styled.div`
  padding: 0 4px 5px 5px;
`;
const LevelMeters = styled.div`
  display: grid;
  grid-template-columns: minmax(0, 1fr) 18px;
  grid-template-rows: 30px 30px;
  gap: 3px;
  margin: 0 6px 0 7px;
  padding-top: 5px;
`;
const LevelBar = styled.div`
  grid-row: 1 / 3;
  background: linear-gradient(90deg, transparent 4px, #000 4px), linear-gradient(#d9d900 47%, #000 47%, #000 53%, #d9d900 53%);
`;
const ClipBox = styled.div`
  outline: 2px solid #cfcfcf;
  background: #000;
`;
const LevelScale = styled.div`
  position: relative;
  height: 45px;
  margin: 0 32px 0 9px;
  border-top: 2px solid #ccc;
  font-size: 20px;
  line-height: 24px;
`;
const LevelTick = styled.span<{ $major?: boolean }>`
  position: absolute;
  top: 1px;
  width: 2px;
  height: ${(p) => (p.$major ? 9 : 5)}px;
  background: #222;
`;
const StatusBar = styled.footer`
  display: flex;
  align-items: stretch;
  height: 46px;
  background: linear-gradient(#dadada, #a2a2a2);
  line-height: 48px;
`;
const StatusText = styled.div`
  flex: 1;
  padding-left: 14px;
`;
const StatusCell = styled.div<{ $w: number; $open?: boolean }>`
  width: ${(p) => p.$w}px;
  padding-left: 14px;
  border-left: ${(p) => (p.$open ? "0" : "2px solid #8c8c8c")};
  box-shadow: ${(p) => (p.$open ? "none" : "inset 2px 0 0 #d2d2d2")};
  white-space: nowrap;
`;
const Desk = styled.div`
  height: 2px;
  background: linear-gradient(90deg, #333 108px, #b5b5b5 108px, #b5b5b5 756px, #333 756px);
`;

/* ---------- icons ---------- */

const WaveGlyph = ({ color, w = 30, h = 26 }: { color: string; w?: number; h?: number }) => (
  <svg width={w} height={h} viewBox="0 0 30 26">
    <path d="M0 13H30M4 9V17M8 6V21M13 1V25M17 8V19M21 4V22M25 9V17" stroke={color} strokeWidth="2.5" fill="none" />
  </svg>
);
const Bars = () => (
  <svg width="35" height="31" viewBox="0 0 35 31">
    {[1, 3, 6, 9, 13, 17, 22, 30].map((h, i) => (
      <rect key={i} x={i * 4.6} y={31 - h} width="2" height={h} fill="#4d4d4d" />
    ))}
  </svg>
);
const Knob = () => (
  <svg width="40" height="42" viewBox="0 0 40 42">
    <defs>
      <radialGradient id="knob" cx="0.5" cy="0.5" r="0.5">
        <stop offset="0" stopColor="#c4c4c4" />
        <stop offset="0.7" stopColor="#bdbdbd" />
        <stop offset="0.9" stopColor="#f1f1f1" />
        <stop offset="1" stopColor="#aaa" />
      </radialGradient>
    </defs>
    <ellipse cx="20" cy="24" rx="18" ry="17" fill="#000" opacity="0.25" />
    <circle cx="20" cy="20" r="18" fill="url(#knob)" stroke="#666" strokeWidth="2" />
    <path d="M20 2V21" stroke="#000" strokeWidth="3" />
  </svg>
);
const Arrow = ({ left }: { left?: boolean }) => (
  <svg width="30" height="20" viewBox="0 0 30 20">
    <path d={left ? "M29 8H12V1L2 10L12 19V12H29Z" : "M1 8H18V1L28 10L18 19V12H1Z"} fill={ink} />
  </svg>
);
const Multi = ({ color }: { color: string }) => (
  <svg width="38" height="28" viewBox="0 0 38 28">
    <rect width="38" height="28" fill="#161616" />
    <rect x="3" y="3" width="8" height="10" fill={color === "#fff" ? "#777" : "#39659a"} />
    <rect x="13" y="3" width="22" height="10" fill="#dcdcdc" />
    <rect x="3" y="15" width="22" height="10" fill="#dcdcdc" />
    <rect x="27" y="15" width="8" height="10" fill={color === "#fff" ? "#777" : "#39659a"} />
    <path d="M15 9l3-3 3 4 3-4 3 3 3-3 3 3M5 21l3-3 3 4 3-4 3 3 3-3 3 3" stroke={color === "#fff" ? "#555" : color} strokeWidth="3" fill="none" />
  </svg>
);
const Disc = ({ gold, r = 16 }: { gold?: boolean; r?: number }) => (
  <svg width={r * 2 + 2} height={r * 2 + 2} viewBox="0 0 34 34">
    <defs>
      <linearGradient id={gold ? "gold" : "silver"} x1="0" y1="0" x2="1" y2="1">
        <stop offset="0" stopColor={gold ? "#f0a840" : "#f5f5f5"} />
        <stop offset="0.35" stopColor={gold ? "#ffe7b0" : "#bcbcbc"} />
        <stop offset="0.6" stopColor={gold ? "#b9a3d8" : "#f0f0f0"} />
        <stop offset="1" stopColor={gold ? "#e8902a" : "#9a9a9a"} />
      </linearGradient>
    </defs>
    <circle cx="17" cy="17" r="15.5" fill={`url(#${gold ? "gold" : "silver"})`} stroke={gold ? "#a8641d" : "#555"} strokeWidth="2" />
    <circle cx="17" cy="17" r="5" fill="#ddd" stroke="#777" strokeWidth="1.5" />
    <circle cx="17" cy="17" r="2" fill="#555" />
  </svg>
);
const Eye = ({ w = 26 }: { w?: number }) => (
  <svg width={w} height="20" viewBox="0 0 26 20">
    <path d="M1 11C6 2 20 2 25 11C20 18 7 18 1 11Z" fill="#ddd" stroke="#333" strokeWidth="2" />
    <circle cx="13" cy="10" r="5.5" fill="#222" />
    <circle cx="11" cy="8" r="2" fill="#bbb" />
    <path d="M2 6C8 0 19 0 25 6" stroke="#444" strokeWidth="2" fill="none" />
  </svg>
);
const Loop = ({ s = 34 }: { s?: number }) => (
  <svg width={s} height={s * 0.76} viewBox="0 0 34 26">
    <path d="M7 9V22H30V14" fill="none" stroke={ink} strokeWidth="4.5" strokeLinejoin="miter" />
    <path d="M2.5 8H18V0L31 8L18 15V12H7V24H2.5Z" fill={ink} />
  </svg>
);
const Plate = ({ children }: { children: React.ReactNode }) => (
  <svg width="32" height="26" viewBox="0 0 32 26">
    <rect width="32" height="26" rx="2" fill="#3b3b3b" />
    {children}
  </svg>
);
const DownArrow = "M15 0H21V5H27L18 13L9 5H15Z";

const Lens = ({ x, y, sign }: { x: number; y: number; sign?: string }) => (
  <g transform={`translate(${x} ${y})`}>
    <path d="M8 8L18 20" stroke="#000" strokeOpacity="0.25" strokeWidth="6" />
    <path d="M7 7L15 17" stroke="#2d2d2d" strokeWidth="5" />
    <circle r="9" fill="#cfcfcf" stroke="#444" strokeWidth="2" />
    {sign === "+" && <path d="M-5 0H5M0 -5V5" stroke="#000" strokeWidth="2.5" />}
    {sign === "-" && <path d="M-5 0H5" stroke="#000" strokeWidth="2.5" />}
    {sign === "." && <path d="M-1 -4H1V4H-1Z" fill="#555" />}
  </g>
);
const HArrows = <path d="M0 6L8 1V4H26V1L34 6L26 11V8H8V11Z" fill="#000" transform="translate(5 0)" />;
const VArrows = <path d="M7 4L12 12H9V32H12L7 40L2 32H5V12H2Z" fill="#000" />;
const Page = ({ x, w }: { x: number; w: number }) => (
  <rect x={x} y="3" width={w} height="34" fill="#d0d0d0" stroke="#111" strokeWidth="2" strokeDasharray="3 2" />
);
const zooms: { name: string; body: React.ReactNode }[] = [
  { name: "Zoom in horizontally", body: <>{HArrows}<Lens x={22} y={20} sign="+" /></> },
  { name: "Zoom out horizontally", body: <>{HArrows}<Lens x={22} y={20} sign="-" /></> },
  { name: "Zoom out full", body: <><path d="M21 0L24 5H18ZM21 38L24 33H18ZM5 18L10 15V21ZM39 18L34 15V21Z" fill="#000" /><Lens x={21} y={18} sign="-" /></> },
  { name: "Zoom to selection", body: <><Page x={6} w={28} /><Lens x={19} y={15} /></> },
  { name: "Zoom to left edge", body: <><Page x={15} w={24} /><Lens x={14} y={16} sign="." /></> },
  { name: "Zoom to right edge", body: <><Page x={4} w={24} /><Lens x={26} y={16} sign="." /></> },
  { name: "Zoom in vertically", body: <>{VArrows}<Lens x={25} y={18} sign="+" /></> },
  { name: "Zoom out vertically", body: <>{VArrows}<Lens x={25} y={18} sign="-" /></> },
];

const transport: { name: string; off?: boolean; body: React.ReactNode }[] = [
  { name: "Stop", off: true, body: <path d="M12 10H28V30H12Z" fill="#7c7c7c" /> },
  { name: "Play", body: <path d="M15 9L28 20L15 31Z" fill={ink} /> },
  { name: "Pause", off: true, body: <path d="M11 10H17V30H11ZM23 10H29V30H23Z" fill="#808080" /> },
  { name: "Play to end", body: <><circle cx="20" cy="20" r="14" fill="none" stroke={ink} strokeWidth="3" /><path d="M16 9L29 20L16 31Z" fill={ink} /></> },
  { name: "Play looped", body: <g transform="translate(3 8)"><path d="M7 9V22H30V14" fill="none" stroke={ink} strokeWidth="4" /><path d="M2.5 8H18V0L31 8L18 15V12H7V24H2.5Z" fill={ink} /></g> },
  { name: "Go to beginning", body: <path d="M10 8H14V32H10ZM29 8V32L16 20Z" fill={ink} /> },
  { name: "Rewind", body: <path d="M20 9V31L8 20ZM32 9V31L20 20Z" fill={ink} /> },
  { name: "Fast forward", body: <path d="M8 9V31L20 20ZM20 9V31L32 20Z" fill={ink} /> },
  { name: "Go to end", body: <path d="M26 8H30V32H26ZM11 8V32L24 20Z" fill={ink} /> },
  { name: "Record", body: <circle cx="20" cy="20" r="9" fill="#c41f1f" stroke="#7a3a3a" strokeWidth="1.5" /> },
];

/* ---------- page ---------- */

const menus = ["File", "Edit", "Clip", "View", "Insert", "Effects", "Options", "Window", "Help"];
const rulerMarks = Array.from({ length: 36 }, (_, i) => 33.1 + i * 0.05).filter((t) => at(t) < 1);
const levels = Array.from({ length: 73 }, (_, i) => i - 72);
const SELECTION = [["Selection", "0:33.308", "0:33.600", "0:00.291"], ["View", "0:33.070", "0:34.853", "0:01.783"]];

const zoomButton = (z: { name: string; body: React.ReactNode }) => (
  <ZoomButton key={z.name} aria-label={z.name}>
    <svg width="44" height="44" viewBox="0 0 44 44">{z.body}</svg>
  </ZoomButton>
);

function FilesPanel() {
  return (
    <Panel $grow>
      <PanelHead $pad={17}>
        <Tab label="Files" closable />
        <Tab label="Effects" behind />
        <HeadSpace />
        <Corner />
      </PanelHead>
      <FilesBody>
        <FileTools>
          <ToolButton aria-label="Import file">
            <svg width="42" height="38" viewBox="0 0 42 38">
              <path d="M20 3H33L40 10V28H20Z" fill="#efefef" stroke="#666" strokeWidth="2" />
              <path d="M32 3V11H40" fill="none" stroke="#666" strokeWidth="2" />
              <path d="M2 34V12H12L15 15H22V34Z" fill="#d8d8d8" stroke="#666" strokeWidth="2" />
              <path d="M10 18H40L33 35H3Z" fill="#9a9a9a" stroke="#444" strokeWidth="2" />
            </svg>
          </ToolButton>
          <ToolButton aria-label="Close files">
            <svg width="42" height="38" viewBox="0 0 42 38">
              <path d="M2 28V3H11L14 7H30V28Z" fill="#c9c9c9" stroke="#8d8d8d" strokeWidth="2" />
              <path d="M19 14L39 36M39 12L20 36" stroke="#3b3b3b" strokeWidth="4" />
            </svg>
          </ToolButton>
          <ToolButton aria-label="Edit file">
            <svg width="38" height="40" viewBox="0 0 36 40">
              <path d={DownArrow} fill="#000" />
              <rect y="15" width="36" height="24" fill="#3e3e3e" />
              <path d="M2 27L5 22L8 27L11 20L14 27L18 19L21 27L24 20L27 26L30 21L34 27V31L30 36L27 31L24 36L21 31L18 37L14 31L11 36L8 31L5 35L2 31Z" fill="#eee" />
            </svg>
          </ToolButton>
          <ToolButton aria-label="Insert into multitrack">
            <svg width="38" height="42" viewBox="0 0 38 42">
              <path d={DownArrow} fill="#000" />
              <g transform="translate(0 14)"><Multi color="#fff" /></g>
            </svg>
          </ToolButton>
          <ToolButton aria-label="Insert into CD">
            <svg width="36" height="42" viewBox="0 0 36 42">
              <path d={DownArrow} fill="#000" />
              <g transform="translate(4 13) scale(0.84)"><Disc /></g>
            </svg>
          </ToolButton>
          <HeadSpace />
          <ToolButton $on aria-label="Show options">
            <svg width="16" height="34" viewBox="0 0 16 34">
              <path d="M2 2H14V14H2ZM2 20H14V32H2Z" fill="#fff" stroke="#222" strokeWidth="2.5" />
              <path d="M4 7L8 11L14 1" fill="none" stroke="#000" strokeWidth="2.5" />
            </svg>
            <Eye />
          </ToolButton>
        </FileTools>
        <FileList>
          {["1.wav", "2.wav"].map((f) => (
            <FileRow key={f}>
              <svg width="32" height="27" viewBox="0 0 32 27">
                <rect width="32" height="27" rx="4" fill="#2c5598" />
                <rect width="32" height="12" rx="4" fill="#5e86c4" />
                <path d="M3 14H29M8 8V20M13 5V23M18 9V19M23 5V23" stroke="#3fe0a8" strokeWidth="2.5" />
              </svg>
              <FileName>{f}</FileName>
            </FileRow>
          ))}
        </FileList>
        <ControlRow $top={17} $left={11}>
          <ToolButton $on aria-label="Auto-play">
            <svg width="38" height="32" viewBox="0 0 38 32">
              <path d="M1 1L9 9L1 16Z" fill="#222" />
              <path d="M11 11H16L24 4V29L16 22H11Z" fill="#ccc" stroke="#555" strokeWidth="2" />
              <path d="M28 10C31 14 31 19 28 23M32 6C38 12 38 21 32 28" fill="none" stroke="#666" strokeWidth="2" />
            </svg>
          </ToolButton>
          <ToolButton $on aria-label="Loop play"><Loop /></ToolButton>
          <ToolButton $w={60} aria-label="Play file">
            <svg width="14" height="22" viewBox="0 0 14 22"><path d="M1 0L13 11L1 22Z" fill="#777" /></svg>
          </ToolButton>
          <ControlRow $gap={6} $left={7} $top={4}><Bars /><Knob /><Gain href="#volume">0</Gain></ControlRow>
        </ControlRow>
        <ControlRow $top={18} $left={4} $gap={12}>
          <TickBox>
            <Tick type="checkbox" id="tempo-follow" defaultChecked />
            <svg width="26" height="28" viewBox="0 0 26 28"><path d="M5 15L10 22L20 6" fill="none" stroke="#000" strokeWidth="4" /></svg>
          </TickBox>
          <label htmlFor="tempo-follow">Follow session tempo</label>
        </ControlRow>
        <Rule />
        <ControlRow $top={13} $left={8} $gap={14}>
          <label htmlFor="sort-by">Sort By:</label>
          <Combo id="sort-by" label="Sort By" value="Filename" w={231} h={39} />
        </ControlRow>
        <ControlRow $top={12} $left={11}>
          <ToolButton $on $h={40} aria-label="Show audio files">
            <Plate><path d="M3 13H29M8 8V18M13 4V22M19 9V17M24 6V20" stroke="#eee" strokeWidth="2.5" /></Plate>
          </ToolButton>
          <ToolButton $on $h={40} aria-label="Show loop files">
            <Plate><path d="M10 6C6 12 8 21 16 21S27 12 22 6" fill="none" stroke="#eee" strokeWidth="3" /><path d="M6 4H15V12Z" fill="#eee" /></Plate>
          </ToolButton>
          <ToolButton $on $h={40} aria-label="Show video files">
            <Plate><rect x="10" y="4" width="12" height="18" fill="#ddd" /><path d="M6 4V22M26 4V22" stroke="#eee" strokeWidth="3" strokeDasharray="3 3" /></Plate>
          </ToolButton>
          <ToolButton $on $h={40} aria-label="Show MIDI files">
            <Plate><path d="M13 19V6L22 4V17" fill="none" stroke="#eee" strokeWidth="2.5" /><circle cx="10" cy="19" r="3.5" fill="#eee" /><circle cx="20" cy="17" r="3.5" fill="#eee" /></Plate>
          </ToolButton>
          <Upright $h={42} />
          <ToolButton $on $h={40} aria-label="Filter">
            <svg width="20" height="34" viewBox="0 0 20 34"><path d="M0 2H20L12 14V33H9V14Z" fill="#444" /></svg>
            <Eye />
          </ToolButton>
          <ToolButton $h={40} aria-label="Show path">
            <svg width="38" height="32" viewBox="0 0 38 32">
              <path d="M3 31H37V8" fill="none" stroke="#555" strokeWidth="3" />
              <path d="M1 29V6L4 1H12L15 5H35V29Z" fill="#dedede" stroke="#888" strokeWidth="1" />
              <text x="4" y="21" fontSize="14" fontFamily="DejaVu Sans Condensed, sans-serif" fill="#222">C:\&gt;</text>
            </svg>
          </ToolButton>
        </ControlRow>
      </FilesBody>
    </Panel>
  );
}

function SessionView() {
  return (
    <Panel $grow>
      <PanelHead $pad={9} $active>
        <Tab label="Main" active />
        <Tab label="Mixer" behind />
        <HeadSpace />
        <Corner active />
      </PanelHead>
      <SessionBody>
        <TrackColumn>
          <TrackTools>
            <ToolButton $on aria-label="Inputs and outputs">
              <svg width="34" height="36" viewBox="0 0 34 36">
                <path d="M6 8H22V1L33 10L22 18V13H6ZM28 24H12V18L1 27L12 35V29H28Z" fill="#3c3c3c" />
              </svg>
            </ToolButton>
            <ToolButton $w={62} aria-label="Effects rack">
              <svg width="56" height="46" viewBox="0 0 56 46">
                <text x="14" y="31" fontSize="34" fontStyle="italic" fontFamily="Liberation Serif, serif" fill={ink} stroke={ink}>fx</text>
              </svg>
            </ToolButton>
            <ToolButton aria-label="Sends">
              <svg width="28" height="32" viewBox="0 0 28 32">
                <path d="M6 1H10V9H18V3L27 11L18 18V13H10V23H15L8 31L0 23H6Z" fill={ink} />
              </svg>
            </ToolButton>
            <ToolButton $w={54} aria-label="EQ">
              <svg width="26" height="24" viewBox="0 0 26 24">
                <path d="M0 7H7V24H0ZM9 0H16V24H9ZM18 3H25V24H18Z" fill={ink} />
              </svg>
            </ToolButton>
          </TrackTools>
          <TrackCard $sel $share={931}>
            <TrackControls $scrolled>
              <Route><Arrow left /><Combo label="Track 7 output" value="Master" w={208} side /></Route>
              <Route>
                <svg width="30" height="26" viewBox="0 0 30 26"><path d="M10 2L22 13L10 24Z" fill="#eee" stroke="#555" strokeWidth="2" /></svg>
                <Combo label="Automation mode" value="Read" w={210} />
              </Route>
            </TrackControls>
            <Meter><MeterFill /><MeterFloor /></Meter>
          </TrackCard>
          <TrackCard $share={459}>
            <TrackControls>
              <TrackTitle>
                <TrackBadge>
                  <TrackIcon><WaveGlyph color="#37d45c" w={33} h={24} /></TrackIcon>
                  <TrackName aria-label="Track name" defaultValue="Track 8" />
                </TrackBadge>
                <ToggleButton aria-label="Mute" $a="#9fbfa3" $b="#6d8f76">M</ToggleButton>
                <ToggleButton aria-label="Solo" $a="#bdbda3" $b="#96967a">S</ToggleButton>
                <ToggleButton aria-label="Record" $a="#c4a4a4" $b="#977474">R</ToggleButton>
              </TrackTitle>
              <ControlRow $gap={7}><Bars /><Knob /><Gain href="#gain">0</Gain></ControlRow>
              <Route><Arrow /><Combo label="Track 8 input" value="" w={208} side /></Route>
              <Route><Arrow left /><Combo label="Track 8 output" value="Master" w={208} side /></Route>
            </TrackControls>
            <Meter><MeterGap /><MeterClip /><MeterFill /></Meter>
          </TrackCard>
          <ControlRow $top={58} />
        </TrackColumn>
        <Splitter />
        <Timeline>
          <ScrollTrack><ThumbX style={{ left: "40.25%" }} /></ScrollTrack>
          <MarkerRow $row={2}>
            <Marker style={{ left: pct(SEL.from) }} />
            <Marker $end style={{ left: pct(SEL.to) }} />
          </MarkerRow>
          <Lanes>
            <Lane $share={924}>
              <Wave id="upper" h={924} mid={384} d={upperPath} bg="#003f22" wave="#86ffc8" selBg="#c0fcec" selWave="#0c4a31" axis="#82b4cf" under="#000" />
            </Lane>
            <LaneBar />
            <Lane $share={452}>
              <Wave id="lower" h={452} mid={264} d={lowerPath} bg="#3b7258" wave="#73ae94" selBg="#b3d8ca" selWave="#3f7860" axis="#749078" />
            </Lane>
          </Lanes>
          <ScrollTrack $vertical><ThumbY style={{ top: "73.1%", height: "15.2%" }} /></ScrollTrack>
          <Ruler>
            <RulerUnit>hms</RulerUnit>
            {rulerMarks.map((t, i) => (
              <React.Fragment key={i}>
                <RulerTick $minor={i % 2 === 1} style={{ left: pct(t) }} />
                {i % 2 === 0 && i > 0 && <ScaleText style={{ left: pct(t) }}>{t.toFixed(1)}</ScaleText>}
              </React.Fragment>
            ))}
            <RulerUnit $right>hms</RulerUnit>
          </Ruler>
          <MarkerRow $row={5}>
            <Marker $bottom style={{ left: pct(SEL.from) }} />
            <Marker $bottom $end style={{ left: pct(SEL.to) }} />
          </MarkerRow>
        </Timeline>
      </SessionBody>
    </Panel>
  );
}

function BottomPanel({ title, children }: { title: string; children: React.ReactNode }) {
  return (
    <Panel>
      <PanelHead $pad={13}>
        <Tab label={title} closable />
        <HeadSpace />
        <Corner />
      </PanelHead>
      <PanelBody $h={155}>{children}</PanelBody>
    </Panel>
  );
}

export default function App() {
  return (
    <Shell>
      <GlobalStyle />
      <TopHint />
      <TitleBar>
        <AppBadge>Au</AppBadge>
        <AppTitle>Adobe Audition - Untitled.ses*</AppTitle>
        <WindowButton aria-label="Minimize">
          <svg width="20" height="20" viewBox="0 0 20 20"><path d="M0 10H20" stroke="#fff" strokeWidth="2" /></svg>
        </WindowButton>
        <WindowButton aria-label="Restore">
          <svg width="21" height="21" viewBox="0 0 21 21"><path d="M1 5H16V20H1ZM5 5V1H20V16H16" fill="none" stroke="#fff" strokeWidth="2" /></svg>
        </WindowButton>
        <WindowButton aria-label="Close">
          <svg width="20" height="20" viewBox="0 0 20 20"><path d="M0 0L20 20M20 0L0 20" stroke="#fff" strokeWidth="2" /></svg>
        </WindowButton>
      </TitleBar>
      <MenuBar>{menus.map((m) => <MenuItem key={m}>{m}</MenuItem>)}</MenuBar>
      <ToolBar>
        <ModeStrip>
          <svg width="6" height="44" viewBox="0 0 6 44"><path d="M3 0V44" stroke="#8a8a8a" strokeWidth="4" strokeDasharray="4 3" /></svg>
          <ModeList>
            <Mode>
              <IconFrame>
                <svg width="36" height="34" viewBox="0 0 36 34">
                  <rect width="36" height="34" fill="#2b2868" />
                  <rect y="3" width="36" height="28" fill="#48449a" />
                  <path d="M2 16L6 12L9 15L12 9L15 14L18 6L21 15L24 9L27 14L31 11L34 17L31 22L27 19L24 24L21 20L18 27L15 20L12 24L9 19L6 21Z" fill="#5cf08a" />
                </svg>
              </IconFrame>
              <ModeText>Edit</ModeText>
            </Mode>
            <Mode><IconFrame $on><Multi color="#37d45c" /></IconFrame><ModeText>Multitrack</ModeText></Mode>
            <Mode><IconFrame><Disc gold /></IconFrame><ModeText>CD</ModeText></Mode>
          </ModeList>
        </ModeStrip>
        <svg width="84" height="60" viewBox="0 0 84 60">
          <defs>
            <linearGradient id="strip" x1="0" y1="0" x2="0" y2="1"><stop offset="0" stopColor="#dedede" /><stop offset="1" stopColor="#a5a5a5" /></linearGradient>
          </defs>
          <path d="M0 0H84C62 1 52 14 40 32C30 47 22 59 2 60H0Z" fill="url(#strip)" />
        </svg>
        <ToolGroup>
          <ToolButton $on aria-label="Hybrid tool">
            <svg width="36" height="38" viewBox="0 0 36 38"><path d="M2 1L20 20L2 28Z" fill="#27506e" /><path d="M2 1L20 20L11 22Z" fill="#12293c" /></svg>
          </ToolButton>
          <ToolButton $w={64} aria-label="Time selection tool">
            <svg width="18" height="34" viewBox="0 0 18 34"><path d="M2 1C6 1 9 3 9 7V27C9 31 6 33 2 33M16 1C12 1 9 3 9 7M9 27C9 31 12 33 16 33" fill="none" stroke="#2e3f55" strokeWidth="3" /></svg>
          </ToolButton>
          <ToolButton aria-label="Move tool">
            <svg width="42" height="36" viewBox="0 0 42 36">
              <path d="M2 0L20 18L2 26Z" fill="#27506e" />
              <path d="M30 12L34 17H32V22H36V20L41 24L36 28V26H32V31H34L30 36L26 31H28V26H24V28L19 24L24 20V22H28V17H26Z" fill="#2c4f70" />
            </svg>
          </ToolButton>
          <ToolButton $w={66} aria-label="Scrub tool">
            <svg width="40" height="38" viewBox="0 0 40 38">
              <path d="M2 1L18 20L12 21L17 32L13 33L8 23L2 27Z" fill="#ddd" stroke="#111" strokeWidth="2" />
              <path d="M22 20H27L37 12V37L27 30H22Z" fill="#6f9fd0" stroke="#1d3a5a" strokeWidth="1.5" />
            </svg>
          </ToolButton>
        </ToolGroup>
        <Labelled>
          Workspace:
          <Combo label="Workspace" value="Video + Audio Session" w={507} />
        </Labelled>
      </ToolBar>

      <Workspace>
        <LeftColumn>
          <Panel>
            <PanelHead $pad={10}>
              <Tab label="Video" closable />
              <HeadSpace />
              <Corner />
            </PanelHead>
            <PanelBody $h={376} />
          </Panel>
          <FilesPanel />
        </LeftColumn>
        <SessionView />
      </Workspace>

      <BottomRow>
        <BottomPanel title="Transport">
          <TransportRow>
            {transport.map((t) => (
              <TransportButton key={t.name} aria-label={t.name} disabled={t.off}>
                <svg width="40" height="40" viewBox="0 0 40 40">{t.body}</svg>
              </TransportButton>
            ))}
          </TransportRow>
        </BottomPanel>
        <BottomPanel title="Time"><Clock>0:33.308</Clock></BottomPanel>
        <BottomPanel title="Zoom">
          <ZoomRows>
            <ZoomLine>{zooms.slice(0, 4).map(zoomButton)}</ZoomLine>
            <ZoomLine>
              {zooms.slice(4, 6).map(zoomButton)}
              <ZoomRule />
              {zooms.slice(6).map(zoomButton)}
            </ZoomLine>
          </ZoomRows>
        </BottomPanel>
        <BottomPanel title="Selection/View">
          <SelTable>
            <thead><tr><th /><th>Begin</th><th>End</th><th>Length</th></tr></thead>
            <tbody>
              {SELECTION.map(([name, ...vals]) => (
                <tr key={name}>
                  <th scope="row">{name}</th>
                  {vals.map((v, i) => (
                    <td key={i}><SpanField aria-label={`${name} ${["begin", "end", "length"][i]}`} defaultValue={v} /></td>
                  ))}
                </tr>
              ))}
            </tbody>
          </SelTable>
        </BottomPanel>
        <BottomPanel title="Session Properties">
          <SessionGrid>
            <RightLabel htmlFor="tempo">Tempo:</RightLabel>
            <Inline><Field id="tempo" $w={106} defaultValue="120" />bpm</Inline>
            <Inline><Field $w={72} defaultValue="4" />beats/bar</Inline>
            <WideButton>Advanced...</WideButton>
            <RightLabel htmlFor="key">Key:</RightLabel>
            <Combo id="key" label="Key" value="(none)" w={146} />
            <Combo label="Time signature" value="4/4 time" w={158} />
            <WideButton>Metronome</WideButton>
            <RightLabel htmlFor="monitoring">Monitoring:</RightLabel>
            <Combo id="monitoring" label="Monitoring" value="External" w={184} />
            <Inline><Dot type="radio" name="monitor" disabled />Smart Input</Inline>
            <Inline><Dot type="radio" name="monitor" disabled />Always Input</Inline>
          </SessionGrid>
        </BottomPanel>
      </BottomRow>

      <LevelsWrap>
        <Panel>
          <PanelHead $pad={16}>
            <Tab label="Levels" closable />
            <HeadSpace />
            <Corner />
          </PanelHead>
          <PanelBody>
            <LevelMeters><LevelBar /><ClipBox /><ClipBox /></LevelMeters>
            <LevelScale>
              {levels.map((db) => {
                const left = (n: number) => ({ left: `${((n + 72) / 72) * 100}%` });
                return (
                  <React.Fragment key={db}>
                    <LevelTick $major style={left(db)} />
                    {db < 0 && [1, 2, 3, 4, 5].map((k) => <LevelTick key={k} style={left(db + k / 6)} />)}
                    {db > -72 && <ScaleText style={left(db)}>{db}</ScaleText>}
                  </React.Fragment>
                );
              })}
              <ScaleText style={{ left: "0.26%" }}>dB</ScaleText>
            </LevelScale>
          </PanelBody>
        </Panel>
      </LevelsWrap>
      <StatusBar>
        <StatusText>Opened in 0.67 seconds</StatusText>
        <StatusCell $w={43} $open>1</StatusCell>
        <StatusCell $w={303}>48000 • 32-bit Mixing</StatusCell>
        <StatusCell $w={172}>30.09 MB</StatusCell>
        <StatusCell $w={219}>240.13 GB free</StatusCell>
        <StatusCell $w={236}>186:31:16.53 free</StatusCell>
        <StatusCell $w={167} />
        <StatusCell $w={250}>Timeline</StatusCell>
      </StatusBar>
      <Desk />
    </Shell>
  );
}
